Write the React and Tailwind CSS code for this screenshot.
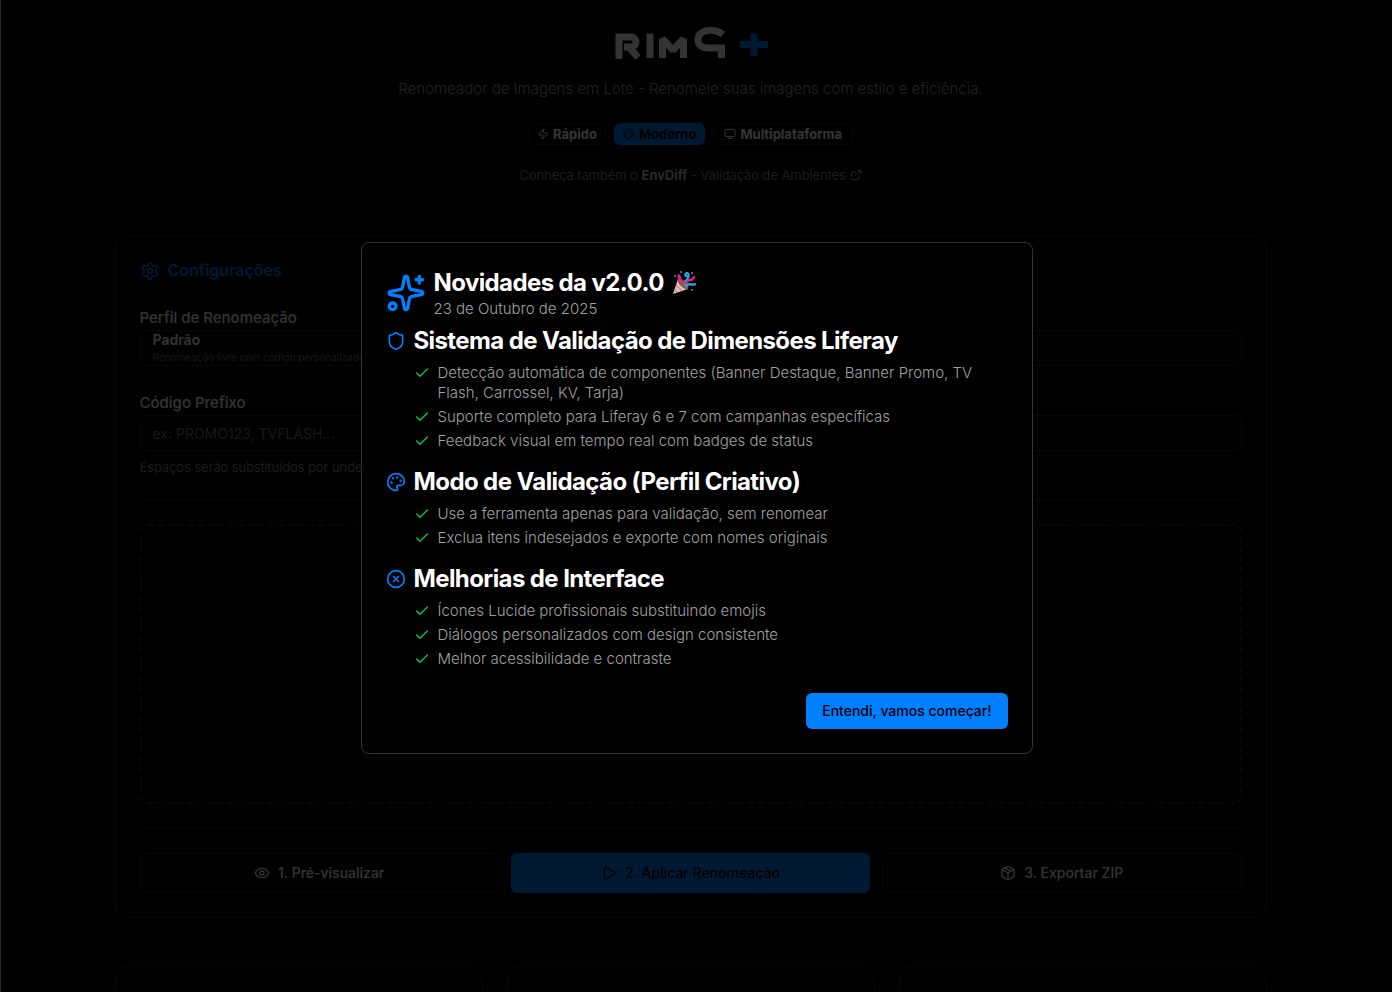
import { Check, CircleX, ExternalLink, Eye, Monitor, Package, Palette, Play, Settings, Shield, Sparkles, Zap } from "lucide-react";

const sections = [
    {
        icon: Shield,
        title: "Sistema de Validação de Dimensões Liferay",
        items: [
            "Detecção automática de componentes (Banner Destaque, Banner Promo, TV Flash, Carrossel, KV, Tarja)",
            "Suporte completo para Liferay 6 e 7 com campanhas específicas",
            "Feedback visual em tempo real com badges de status",
        ],
    },
    {
        icon: Palette,
        title: "Modo de Validação (Perfil Criativo)",
        items: [
            "Use a ferramenta apenas para validação, sem renomear",
            "Exclua itens indesejados e exporte com nomes originais",
        ],
    },
    {
        icon: CircleX,
        title: "Melhorias de Interface",
        items: [
            "Ícones Lucide profissionais substituindo emojis",
            "Diálogos personalizados com design consistente",
            "Melhor acessibilidade e contraste",
        ],
    },
];

function Logo() {
    return (
        <svg viewBox="0 0 154 36" className="h-9 w-[154px]" fill="none" role="img" aria-label="RIMG+">
            <g stroke="#fff" strokeWidth="7">
                <path d="M5 34V12H17a4.500 4.500 0 0 1 0 10H10M14 21L24 32.500" />
                <path d="M36 8.500V33" />
                <path d="M48.500 33V14L59 25L69.500 14V33" strokeLinejoin="bevel" />
                <path d="M109 9.500C99 2 84 5 84 14.500C84 21 89 23 94 23H107.500V33" />
            </g>
            <path d="M140 8.500V31M126 19.500H155" stroke="#007fff" strokeWidth="7" />
        </svg>
    );
}

function PartyPopper() {
    return (
        <svg viewBox="0 0 24 24" className="size-6" fill="none" aria-hidden="true">
            <path d="M6 8L1 23L16 18Z" fill="#e6c3a8" />
            <path d="M4 14L10 20M2.500 18L5 21.500M6 9L14 18" stroke="#b98bc9" strokeWidth="1.500" />
            <ellipse cx="11" cy="13" rx="3" ry="7" transform="rotate(-45 11 13)" fill="#8c5a4a" />
            <path d="M10 12C6 8 9 6 6 4" stroke="#e0218a" strokeWidth="3" />
            <path d="M12 11C17 8 18 3 15 2C12 3 13 6 16 5" stroke="#29a9e8" strokeWidth="2" />
            <path d="M13 12C16 11 16 8 19 9C21 9 20 7 23 6" stroke="#e0218a" strokeWidth="2.500" />
            <path d="M13 15C17 11 20 15 24 13" stroke="#29a9e8" strokeWidth="2.500" />
            <g fill="#f5c6d6">
                <circle cx="9" cy="1" r="0.800" />
                <circle cx="3" cy="5" r="0.800" />
                <circle cx="20" cy="2" r="0.800" />
                <circle cx="20" cy="19" r="0.800" />
            </g>
        </svg>
    );
}

function Header() {
    return (
        <header className="flex flex-col items-center">
            <Logo />
            <p className="mt-4 text-[15px] leading-6 font-light text-neutral-400">
                Renomeador de Imagens em Lote - Renomeie suas imagens com estilo e eficiência.
            </p>
            <div className="mt-[22px] flex gap-2 text-[13px] leading-4 font-bold">
                <span className="flex items-center gap-1 rounded-md border border-neutral-800 px-2 py-0.5">
                    <Zap className="size-3" /> Rápido
                </span>
                <span className="flex items-center gap-1 rounded-md border border-[#007fff] bg-[#007fff] px-2 py-0.5 text-black">
                    <Palette className="size-3" /> Moderno
                </span>
                <span className="flex items-center gap-1 rounded-md border border-neutral-800 px-2.5 py-0.5">
                    <Monitor className="size-3" /> Multiplataforma
                </span>
            </div>
            <a href="#envdiff" className="mt-5 flex items-center gap-1 text-[13px] leading-5 font-light text-neutral-400">
                <span>
                    Conheça também o <strong className="font-semibold text-neutral-300">EnvDiff</strong> - Validação de Ambientes
                </span>
                <ExternalLink className="size-3" />
            </a>
        </header>
    );
}

function Configuracoes() {
    return (
        <main className="mt-[50px] rounded-xl border border-neutral-800 p-6">
            <h2 className="flex items-center gap-2 text-base leading-[21px] font-semibold text-[#007fff]">
                <Settings className="size-5" /> Configurações
            </h2>

            <div className="mt-6">
                <label htmlFor="perfil" className="block text-[15px] leading-[25px] font-medium">Perfil de Renomeação</label>
                <button id="perfil" type="button" className="block h-9 w-full rounded-md border border-neutral-800 px-3 text-left">
                    <span className="block text-sm leading-[18px] font-semibold">Padrão</span>
                    <span className="block text-[10px] leading-4 text-neutral-500">Renomeação livre com código personalizado</span>
                </button>
            </div>

            <div className="mt-6">
                <label htmlFor="prefixo" className="block text-[15px] leading-[25px] font-medium">Código Prefixo</label>
                <input
                    id="prefixo"
                    type="text"
                    placeholder="ex: PROMO123, TVFLASH..."
                    className="block h-9 w-full rounded-md border border-neutral-800 bg-transparent px-3 text-sm placeholder:text-neutral-500"
                />
                <p className="mt-2 text-[13px] leading-4 font-light text-neutral-400">Espaços serão substituídos por underscores</p>
            </div>

            <hr className="my-6 border-neutral-800" />
            <div className="h-[280px] rounded-lg border-2 border-dashed border-neutral-800" />
            <hr className="my-6 border-neutral-800" />

            <div className="grid grid-cols-3 gap-3 text-sm font-medium">
                <button type="button" className="flex h-10 items-center justify-center gap-2 rounded-md border border-neutral-800">
                    <Eye className="size-4" /> 1. Pré-visualizar
                </button>
                <button type="button" className="flex h-10 items-center justify-center gap-2 rounded-md bg-[#007fff] text-black">
                    <Play className="size-4" /> 2. Aplicar Renomeação
                </button>
                <button type="button" className="flex h-10 items-center justify-center gap-2 rounded-md border border-neutral-800">
                    <Package className="size-4" /> 3. Exportar ZIP
                </button>
            </div>
        </main>
    );
}

function Novidades() {
    return (
        <div className="fixed inset-y-0 right-0 left-px flex items-center justify-center bg-black/80">
            <div role="dialog" aria-labelledby="novidades" className="mt-1 w-full max-w-2xl rounded-lg border border-[#333333] bg-black p-6">
                <div className="flex items-center gap-2">
                    <Sparkles className="size-10 text-[#007fff]" />
                    <div>
                        <h2 id="novidades" className="flex items-center gap-2 text-2xl leading-8 font-bold tracking-tight">
                            Novidades da v2.0.0 <PartyPopper />
                        </h2>
                        <p className="text-[15px] leading-5 font-light text-neutral-400">23 de Outubro de 2025</p>
                    </div>
                </div>

                <div className="mt-1 space-y-[13px]">
                    {sections.map(({ icon: Icon, title, items }) => (
                        <section key={title}>
                            <h3 className="flex items-center gap-2 text-2xl leading-9 font-bold tracking-tight">
                                <Icon className="size-5 text-[#007fff]" /> {title}
                            </h3>
                            <ul className="mt-1 ml-7 space-y-1 text-[15px] leading-5 font-light text-neutral-400">
                                {items.map((item) => (
                                    <li key={item} className="flex items-start gap-2">
                                        <Check className="mt-0.5 size-4 shrink-0 text-green-500" />
                                        <span>{item}</span>
                                    </li>
                                ))}
                            </ul>
                        </section>
                    ))}
                </div>

                <div className="mt-6 flex justify-end">
                    <button type="button" className="h-9 rounded-md bg-[#007fff] px-4 text-sm font-medium text-black">
                        Entendi, vamos começar!
                    </button>
                </div>
            </div>
        </div>
    );
}

export default function App() {
    return (
        <div className="h-screen overflow-hidden border-l border-neutral-800 bg-black pr-3 font-['Inter',sans-serif] text-white">
            <div className="mx-auto max-w-6xl pt-[25px]">
                <Header />
                <Configuracoes />
                <div className="mt-12 grid grid-cols-3 gap-6">
                    <div className="h-40 rounded-xl border border-neutral-800" />
                    <div className="h-40 rounded-xl border border-neutral-800" />
                    <div className="h-40 rounded-xl border border-neutral-800" />
                </div>
            </div>
            <Novidades />
        </div>
    );
}
